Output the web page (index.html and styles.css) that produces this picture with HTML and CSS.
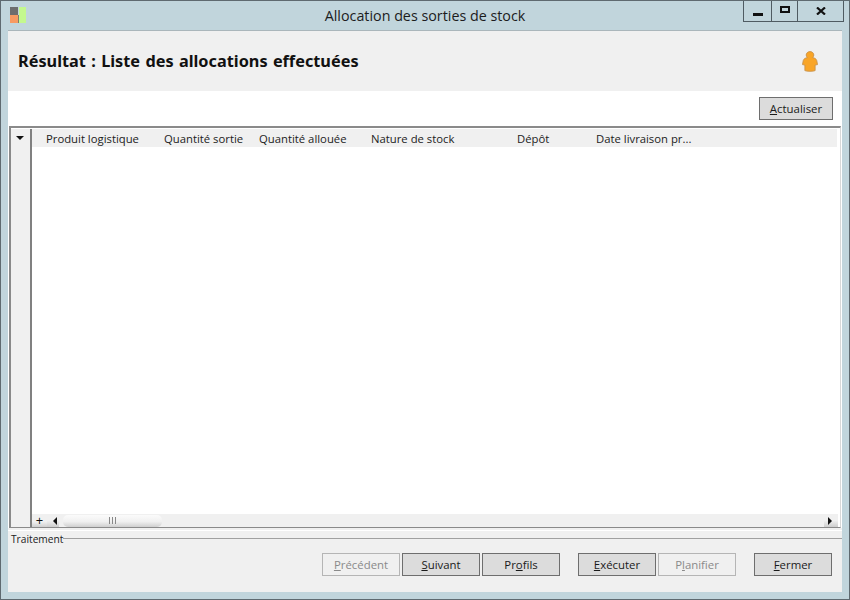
FILE: index.html
```html
<!DOCTYPE html>
<html lang="fr">
<head>
<meta charset="utf-8">
<title>Allocation des sorties de stock</title>
<link rel="stylesheet" href="styles.css">
</head>
<body>
<div class="window">
  <div class="titlebar">
    <svg class="app-icon" width="16" height="16" viewBox="0 0 16 16"><rect x="0" y="0" width="8" height="8" fill="#6d6d6d"/><rect x="0" y="8" width="8" height="8" fill="#f79a62"/><rect x="8" y="8" width="1" height="8" fill="#7d7d6d"/><rect x="9" y="0" width="7" height="16" fill="#c4f88e"/></svg>
    <div class="title">Allocation des sorties de stock</div>
    <div class="controls">
      <div class="ctl ctl-min"><span class="min-glyph"></span></div>
      <div class="ctl ctl-max"><span class="max-glyph"></span></div>
      <div class="ctl ctl-close"><svg width="10" height="8" viewBox="0 0 10 8"><path d="M1 0.5 L9 7.5 M9 0.5 L1 7.5" stroke="#111" stroke-width="2.2" fill="none"/></svg></div>
    </div>
  </div>
  <div class="client">
    <div class="banner">
      <h1 class="heading">Résultat : Liste des allocations effectuées</h1>
      <svg class="user-icon" width="16" height="21" viewBox="0 0 16 21"><path d="M8 0.6 C10.2 0.6 11.8 2.2 11.8 4 C11.8 5.1 11.3 6 10.6 6.6 C12.8 7 14.2 7.9 14.7 9.4 L15.5 13.6 L13.1 14 L13.1 19.6 C11.5 20.5 4.5 20.5 2.9 19.6 L2.9 14 L0.5 13.6 L1.3 9.4 C1.8 7.9 3.2 7 5.4 6.6 C4.7 6 4.2 5.1 4.2 4 C4.2 2.2 5.8 0.6 8 0.6 Z" fill="#f9a527" stroke="#c9924a" stroke-width="0.9"/></svg>
    </div>
    <div class="toolbar">
      <button class="btn btn-refresh"><u>A</u>ctualiser</button>
    </div>
    <div class="grid">
      <div class="grid-main">
        <div class="row-rail"><span class="menu-arrow"></span></div>
        <div class="grid-body">
          <div class="grid-head">
            <span class="col c1">Produit logistique</span>
            <span class="col c2">Quantité sortie</span>
            <span class="col c3">Quantité allouée</span>
            <span class="col c4">Nature de stock</span>
            <span class="col c5">Dépôt</span>
            <span class="col c6">Date livraison pr...</span>
          </div>
          <div class="grid-empty"></div>
        </div>
      </div>
      <div class="grid-foot">
        <div class="foot-rail"></div>
        <div class="plus">+</div>
        <div class="arrow-btn arrow-left"><span class="tri-left"></span></div>
        <div class="thumb"><span class="grip"></span></div>
        <div class="track"></div>
        <div class="arrow-btn arrow-right"><span class="tri-right"></span></div>
      </div>
    </div>
    <div class="group">
      <div class="legend"><span class="legend-text">Traitement</span><span class="legend-line"></span></div>
      <div class="actions">
        <button class="btn btn-off"><u>P</u>récédent</button>
        <button class="btn"><u>S</u>uivant</button>
        <button class="btn">Pr<u>o</u>fils</button>
        <button class="btn btn-run"><u>E</u>xécuter</button>
        <button class="btn btn-off">P<u>l</u>anifier</button>
        <button class="btn btn-close"><u>F</u>ermer</button>
      </div>
    </div>
  </div>
</div>
</body>
</html>
```
FILE: styles.css
```css
* { box-sizing: border-box; }
html, body { margin: 0; padding: 0; }
body { width: 850px; height: 600px; overflow: hidden; font-family: "Open Sans", "Noto Sans", sans-serif; font-size: 12px; color: #1a1a1a; }
.window { width: 850px; height: 600px; background: #c1d5dc; border: 1px solid #5f6a70; display: flex; flex-direction: column; padding: 0 7px 7px; }
.titlebar { height: 29px; flex: none; display: flex; align-items: flex-start; position: relative; }
.app-icon { position: absolute; left: 2px; top: 6px; }
.title { flex: 1; text-align: center; font-size: 14.3px; line-height: 30px; color: #1c1c1c; }
.controls { position: absolute; right: -2px; top: 0; display: flex; height: 21px; border: 1px solid #4f5b62; border-top: 0; }
.ctl { height: 20px; display: flex; align-items: center; justify-content: center; border-left: 1px solid #4f5b62; }
.ctl-min { width: 27px; border-left: 0; }
.ctl-max { width: 26px; }
.ctl-close { width: 46px; }
.min-glyph { width: 10px; height: 3px; background: #111; margin-top: 7px; }
.max-glyph { width: 10px; height: 7px; border: 2px solid #111; margin-top: -3px; }
.client { flex: 1; background: #fff; display: flex; flex-direction: column; border-top: 1px solid #aab6bb; min-height: 0; }
.banner { height: 60px; flex: none; background: #f0f0f0; display: flex; align-items: center; justify-content: space-between; padding: 0 24px 0 10px; }
.heading { margin: 0 0 1px; font-size: 16.3px; word-spacing: 1.1px; font-weight: 700; color: #111; font-family: "Noto Sans", sans-serif; }
.user-icon { flex: none; }
.toolbar { height: 35px; flex: none; display: flex; justify-content: flex-end; align-items: flex-start; padding: 6px 9px 0 0; }
.btn { width: 78px; height: 23px; padding: 0; background: #dcdcdc; border: 1px solid #6e6e6e; font: 11.4px "Open Sans", "Noto Sans", sans-serif; color: #1a1a1a; }
.btn-refresh { width: 74px; }
.btn-off { background: #f0f0f0; border-color: #b5b5b5; color: #8a8a8a; }
.grid { flex: 1; min-height: 0; margin: 0 1px; padding-top: 1px; border: 1px solid #8a8a8a; border-top: 2px solid #8a8a8a; border-right: 1px solid #d8d8d8; border-left-width: 2px; display: flex; flex-direction: column; background: #fff; }
.grid-main { flex: 1; min-height: 0; display: flex; }
.row-rail { width: 21px; flex: none; background: #f0f0f0; border-right: 2px solid #808080; padding: 7px 0 0 5px; }
.menu-arrow { display: block; width: 0; height: 0; border-left: 4px solid transparent; border-right: 4px solid transparent; border-top: 4px solid #111; }
.grid-body { flex: 1; display: flex; flex-direction: column; padding: 0 3px 0 0; }
.grid-head { height: 18px; flex: none; background: #f0f0f0; display: flex; align-items: center; font-size: 11.3px; line-height: 18px; padding-top: 2px; }
.col { display: block; white-space: nowrap; color: #222; }
.c1 { width: 132px; padding-left: 14px; }
.c2 { width: 95px; }
.c3 { width: 112px; }
.c4 { width: 146px; }
.c5 { width: 79px; }
.c6 { width: 120px; }
.grid-empty { flex: 1; }
.grid-foot { height: 13px; flex: none; background: #f0f0f0; display: flex; align-items: center; margin-right: 2px; }
.foot-rail { width: 21px; height: 13px; flex: none; background: #f0f0f0; border-right: 2px solid #808080; }
.plus { width: 15px; height: 13px; flex: none; text-align: center; line-height: 13px; font-size: 13px; color: #111; background: linear-gradient(#f0f0f0 60%, #cfcfcf); }
.arrow-btn { width: 12px; height: 13px; flex: none; display: flex; align-items: center; justify-content: center; background: linear-gradient(#f0f0f0 50%, #cdcdcd); }
.arrow-left { margin-right: 4px; }
.arrow-right { width: 14px; }
.tri-left { width: 0; height: 0; border-top: 4px solid transparent; border-bottom: 4px solid transparent; border-right: 4px solid #111; margin-left: 4px; }
.tri-right { width: 0; height: 0; border-top: 4px solid transparent; border-bottom: 4px solid transparent; border-left: 4px solid #111; margin-right: 2px; }
.thumb { width: 99px; height: 12px; flex: none; border-radius: 5px; background: linear-gradient(#fbfbfb, #f0f0f0 55%, #cfcfcf); display: flex; align-items: center; justify-content: center; }
.grip { width: 7px; height: 7px; border-left: 1px solid #888; border-right: 1px solid #888; background: linear-gradient(90deg, transparent 2px, #888 2px, #888 3px, transparent 3px); }
.track { flex: 1; }
.group { height: 64px; flex: none; background: #f0f0f0; display: flex; flex-direction: column; padding-top: 2px; }
.legend { height: 16px; display: flex; align-items: center; font-size: 10.2px; line-height: 14px; padding-left: 3px; border-top: 1px solid #fff; }
.legend-text { flex: none; color: #222; }
.legend-line { flex: 1; height: 1px; background: #a0a0a0; }
.actions { display: flex; justify-content: flex-end; padding: 7px 10px 0 0; gap: 2px; }
.btn-run { margin-left: 16px; }
.btn-close { margin-left: 16px; }
```
